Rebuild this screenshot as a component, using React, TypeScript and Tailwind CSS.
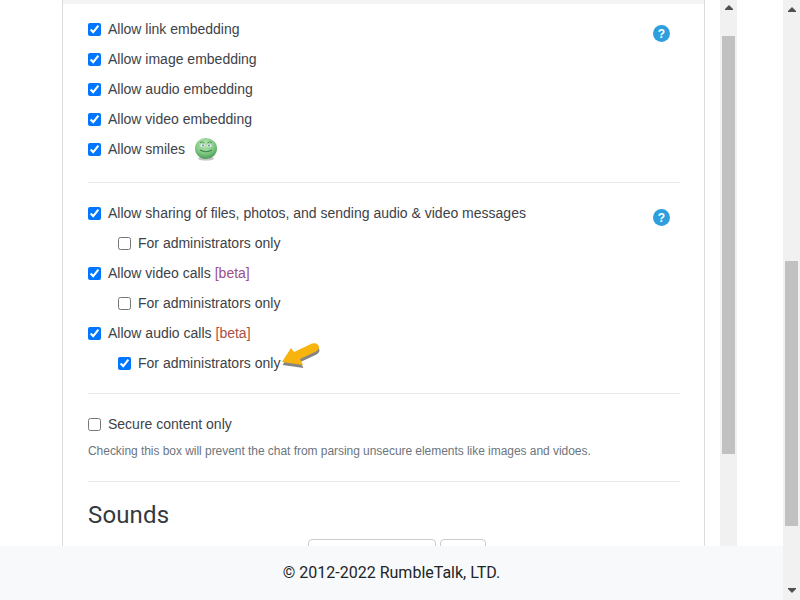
import React from "react";

const Row = ({
  label,
  checked,
  sub,
  children,
}: {
  label: string;
  checked?: boolean;
  sub?: boolean;
  children?: React.ReactNode;
}) => (
  <label className={`flex h-[30px] items-center ${sub ? "pl-[30px]" : ""}`}>
    <input type="checkbox" defaultChecked={checked} className="m-0 h-[13px] w-[13px] shrink-0" />
    <span className="ml-[7px] text-[14px] leading-5 text-[#3d4248]">{label}</span>
    {children}
  </label>
);

const Help = () => (
  <div className="mt-[11px] mr-[10px] flex h-[17px] w-[17px] items-center justify-center rounded-full bg-[#2e9fdc] text-[12px] leading-none font-bold text-white">
    ?
  </div>
);

const Smile = () => (
  <svg width="24" height="24" viewBox="0 0 24 24" className="ml-[9px]">
    <defs>
      <radialGradient id="smile" cx="45%" cy="30%" r="70%">
        <stop offset="0%" stopColor="#b9e4b6" />
        <stop offset="60%" stopColor="#84cb86" />
        <stop offset="100%" stopColor="#4c9c5a" />
      </radialGradient>
    </defs>
    <ellipse cx="12" cy="21.5" rx="8" ry="2" fill="#c4c4c4" />
    <ellipse cx="12" cy="11.5" rx="11" ry="10.5" fill="url(#smile)" />
    <path d="M6 5.5 Q8.5 4 10.5 6 M13.5 6 Q15.5 4 18 5.5" stroke="#4a9657" strokeWidth="1" fill="none" />
    <ellipse cx="8.6" cy="8.5" rx="2.3" ry="1.6" fill="#e8f4ee" />
    <ellipse cx="15.4" cy="8.5" rx="2.3" ry="1.6" fill="#e8f4ee" />
    <circle cx="9" cy="8.5" r="0.9" fill="#5a7a94" />
    <circle cx="15" cy="8.5" r="0.9" fill="#5a7a94" />
    <path d="M6 13 Q12 16.5 18 13" stroke="#3a8248" strokeWidth="1.1" fill="none" />
  </svg>
);

const Arrow = () => (
  <svg width="40" height="28" viewBox="0 0 40 28" className="ml-[1px] -mt-[12px] -mr-[40px]">
    <path
      d="M1 20 L10 6 L13 10 L31 1.5 Q37 0 38 5 Q38 8 34 10 L19 17 L22 23 Z"
      fill="#333"
      opacity="0.6"
      transform="translate(0.5 2)"
    />
    <path
      d="M1 19 L10 5 L13 9 L31 0.5 Q37 -1 38 4 Q38 7 34 9 L19 16 L22 22 Z"
      fill="#f7b30e"
    />
  </svg>
);

const Track = ({ children, className }: { children: React.ReactNode; className: string }) => (
  <div className={`flex w-[17px] shrink-0 flex-col bg-[#f1f1f1] ${className}`}>{children}</div>
);

const Up = () => (
  <svg width="8" height="5" viewBox="0 0 8 5" className="mx-auto">
    <path d="M4 0 L8 4 V5 H0 V4 Z" fill="#505050" />
  </svg>
);

const Down = () => (
  <svg width="8" height="5" viewBox="0 0 8 5" className="mx-auto">
    <path d="M0 0 H8 V1 L4 5 L0 1 Z" fill="#505050" />
  </svg>
);

const App = () => {
  return (
    <div className="flex h-[600px] w-[800px] overflow-hidden bg-white font-['Liberation_Sans',Arial,sans-serif]">
      <div className="relative h-[600px] w-[783px] shrink-0">
        <div className="flex h-[546px] overflow-hidden">
          <div className="ml-[62px] h-[700px] w-[643px] shrink-0 border-x border-[#dcdcdc]">
            <div className="h-1 bg-[#f4f4f4]" />
            <div className="pt-[10px] pr-6 pl-[25px]">
              <div className="flex justify-between">
                <div>
                  <Row label="Allow link embedding" checked />
                  <Row label="Allow image embedding" checked />
                  <Row label="Allow audio embedding" checked />
                  <Row label="Allow video embedding" checked />
                  <Row label="Allow smiles" checked>
                    <Smile />
                  </Row>
                </div>
                <Help />
              </div>

              <div className="mt-[18px] mb-[15px] h-px bg-[#e9e9e9]" />

              <div className="flex justify-between">
                <div>
                  <Row label="Allow sharing of files, photos, and sending audio & video messages" checked />
                  <Row label="For administrators only" sub />
                  <Row label="Allow video calls" checked>
                    <span className="ml-1 text-[14px] text-[#9b4f86]">[beta]</span>
                  </Row>
                  <Row label="For administrators only" sub />
                  <Row label="Allow audio calls" checked>
                    <span className="ml-1 text-[14px] text-[#ad4f45]">[beta]</span>
                  </Row>
                  <Row label="For administrators only" sub checked>
                    <Arrow />
                  </Row>
                </div>
                <Help />
              </div>

              <div className="mt-[15px] mb-[15px] h-px bg-[#e9e9e9]" />

              <Row label="Secure content only" />
              <p className="mt-[2px] h-5 text-[12px] leading-5 tracking-[-0.045px] text-[#6c757d]">
                Checking this box will prevent the chat from parsing unsecure elements like images and vidoes.
              </p>

              <div className="mt-5 h-px bg-[#e9e9e9]" />

              <h2 className="mt-[18px] font-['Roboto',sans-serif] text-[24px] leading-[30px] font-normal tracking-[0.15px] text-[#343a40]">
                Sounds
              </h2>

              <div className="mt-[9px] flex gap-1 pl-[220px]">
                <div className="h-[38px] w-[128px] rounded border border-[#ccc]" />
                <div className="h-[38px] w-[46px] rounded border border-[#ccc]" />
              </div>
            </div>
          </div>

          <Track className="ml-[15px] h-[546px] pt-[5px]">
            <Up />
            <div className="mx-auto mt-[26px] h-[418px] w-[13px] bg-[#c1c1c1]" />
          </Track>
        </div>

        <footer className="flex h-[54px] items-center justify-center bg-[#f8f9fa] font-['Roboto',sans-serif] text-[16px] text-[#212529]">
          © 2012-2022 RumbleTalk, LTD.
        </footer>
      </div>

      <Track className="h-[600px] pt-[7px]">
        <Up />
        <div className="mx-auto mt-[249px] h-[265px] w-[13px] bg-[#c1c1c1]" />
        <div className="mt-[62px]">
          <Down />
        </div>
      </Track>
    </div>
  );
};

export default App;
